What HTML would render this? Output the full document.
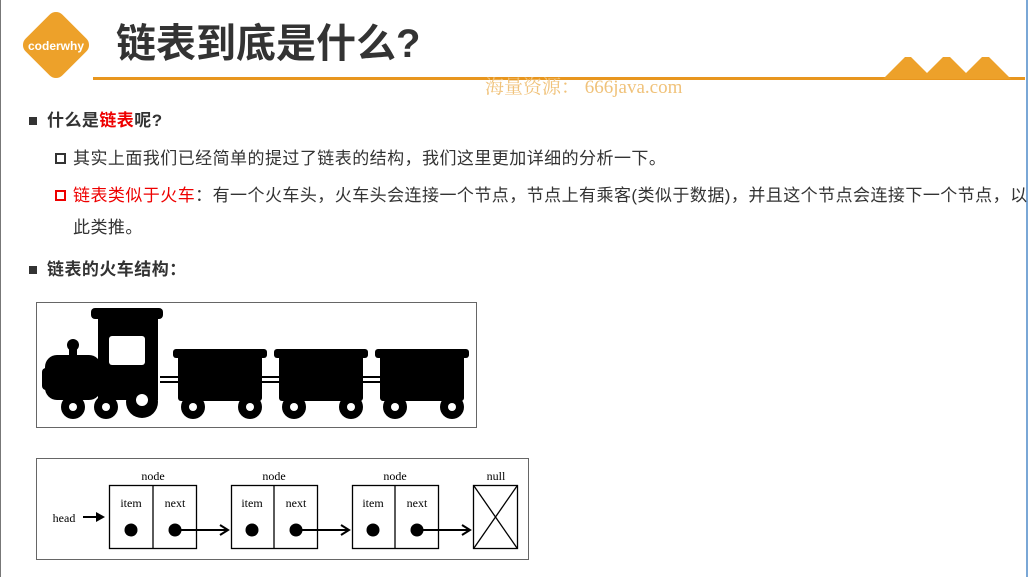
<!DOCTYPE html>
<html><head><meta charset="utf-8"><style>
body{margin:0;width:1029px;height:577px;background:#fff;position:relative;overflow:hidden;font-family:"Liberation Sans","Noto Sans CJK SC",sans-serif;color:#333}
.a{position:absolute;white-space:nowrap}
.sq{position:absolute;width:8px;height:8px;background:#333}
.hs{position:absolute;width:7px;height:7px;border:2px solid #333}
.t{font-size:17px;letter-spacing:0.45px;line-height:22px}
</style></head><body>
<div class="a" style="left:0;top:0;width:1px;height:577px;background:#777"></div>
<div class="a" style="left:1026px;top:0;width:2px;height:577px;background:#7aa7d6"></div>
<svg class="a" style="left:0;top:0" width="1029" height="100">
<rect x="30" y="19" width="52" height="52" rx="9" fill="#eda12a" transform="rotate(45 56 45)"/>
<text x="56" y="50" font-family="Liberation Sans" font-weight="bold" font-size="12" fill="#fff" text-anchor="middle">coderwhy</text>
<rect x="93" y="77" width="932" height="3" fill="#e8961e"/>
<path d="M883 79 L905 57 L911 57 L927 73 L943 57 L950 57 L966 73 L982 57 L989 57 L1011 79 Z" fill="#eda12a"/>
</svg>
<div class="a" style="left:116px;top:20px;font-size:40px;font-weight:bold;color:#333;line-height:48px">链表到底是什么?</div>
<div class="a" style="left:485px;top:72px;font-size:19px;color:#f0c27a;font-family:'Liberation Serif','Noto Serif CJK SC',serif">海量资源： 666java.com</div>

<div class="sq" style="left:29px;top:117px"></div>
<div class="a t" style="left:47px;top:110px;font-weight:bold">什么是<span style="color:#e00">链表</span>呢?</div>
<div class="hs" style="left:55px;top:153px"></div>
<div class="a t" style="left:73px;top:148px">其实上面我们已经简单的提过了链表的结构，我们这里更加详细的分析一下。</div>
<div class="hs" style="left:55px;top:190px;border-color:#e00"></div>
<div class="a t" style="left:73px;top:185px"><span style="color:#e00">链表类似于火车</span>：有一个火车头，火车头会连接一个节点，节点上有乘客(类似于数据)，并且这个节点会连接下一个节点，以</div>
<div class="a t" style="left:73px;top:217px">此类推。</div>
<div class="sq" style="left:29px;top:266px"></div>
<div class="a t" style="left:47px;top:259px;font-weight:bold">链表的火车结构：</div>

<svg class="a" style="left:0;top:0" width="1029" height="577">
<rect x="36.5" y="302.5" width="440" height="125" fill="#fff" stroke="#666"/>
<g fill="#000">
<rect x="91" y="308" width="72" height="11" rx="4"/>
<rect x="98" y="315" width="60" height="85"/>
<circle cx="73" cy="345" r="6"/><rect x="69" y="345" width="8" height="12"/>
<rect x="45" y="355" width="56" height="45" rx="12"/>
<rect x="42" y="368" width="8" height="22" rx="4"/>
<circle cx="73" cy="407" r="12"/><circle cx="106" cy="407" r="12"/><circle cx="142" cy="402" r="16"/>
<rect x="160" y="376" width="220" height="2"/><rect x="160" y="381" width="220" height="2"/>
<g id="car"><rect x="173" y="349" width="94" height="9" rx="3"/><rect x="178" y="355" width="84" height="46" rx="3"/>
<circle cx="193" cy="407" r="12"/><circle cx="250" cy="407" r="12"/></g>
<use href="#car" x="101"/><use href="#car" x="202"/>
</g>
<rect x="109" y="336" width="36" height="29" rx="3" fill="#fff"/>
<g fill="#fff"><circle cx="73" cy="407" r="4"/><circle cx="106" cy="407" r="4"/><circle cx="142" cy="400" r="6"/>
<circle cx="193" cy="407" r="4"/><circle cx="250" cy="407" r="4"/><circle cx="294" cy="407" r="4"/><circle cx="351" cy="407" r="4"/><circle cx="395" cy="407" r="4"/><circle cx="452" cy="407" r="4"/></g>

<rect x="36.5" y="458.5" width="492" height="101" fill="#fff" stroke="#666"/>
<g font-family="Liberation Serif" font-size="12" fill="#000" text-anchor="middle">
<text x="64" y="522">head</text>
<text x="153" y="480">node</text><text x="274" y="480">node</text><text x="395" y="480">node</text><text x="496" y="480">null</text>
<text x="131" y="507">item</text><text x="175" y="507">next</text>
<text x="252" y="507">item</text><text x="296" y="507">next</text>
<text x="373" y="507">item</text><text x="417" y="507">next</text>
</g>
<g stroke="#000" fill="none" stroke-width="1.3">
<rect x="109.5" y="485.5" width="87" height="63"/><line x1="153" y1="485" x2="153" y2="548"/>
<rect x="231.5" y="485.5" width="86" height="63"/><line x1="274" y1="485" x2="274" y2="548"/>
<rect x="352.5" y="485.5" width="86" height="63"/><line x1="395" y1="485" x2="395" y2="548"/>
<rect x="473.5" y="485.5" width="44" height="63"/><line x1="474" y1="486" x2="517" y2="548"/><line x1="517" y1="486" x2="474" y2="548"/>
<g stroke-width="2"><line x1="83" y1="517" x2="103" y2="517"/><line x1="175" y1="530" x2="227" y2="530"/><line x1="296" y1="530" x2="348" y2="530"/><line x1="417" y1="530" x2="469" y2="530"/>
<path d="M220 525 L228 530 L220 535"/><path d="M341 525 L349 530 L341 535"/><path d="M462 525 L470 530 L462 535"/></g>
</g>
<path d="M96 512 L105 517 L96 522 Z" fill="#000"/>
<g fill="#000"><circle cx="131" cy="530" r="6.5"/><circle cx="175" cy="530" r="6.5"/><circle cx="252" cy="530" r="6.5"/><circle cx="296" cy="530" r="6.5"/><circle cx="373" cy="530" r="6.5"/><circle cx="417" cy="530" r="6.5"/></g>
</svg>
</body></html>
